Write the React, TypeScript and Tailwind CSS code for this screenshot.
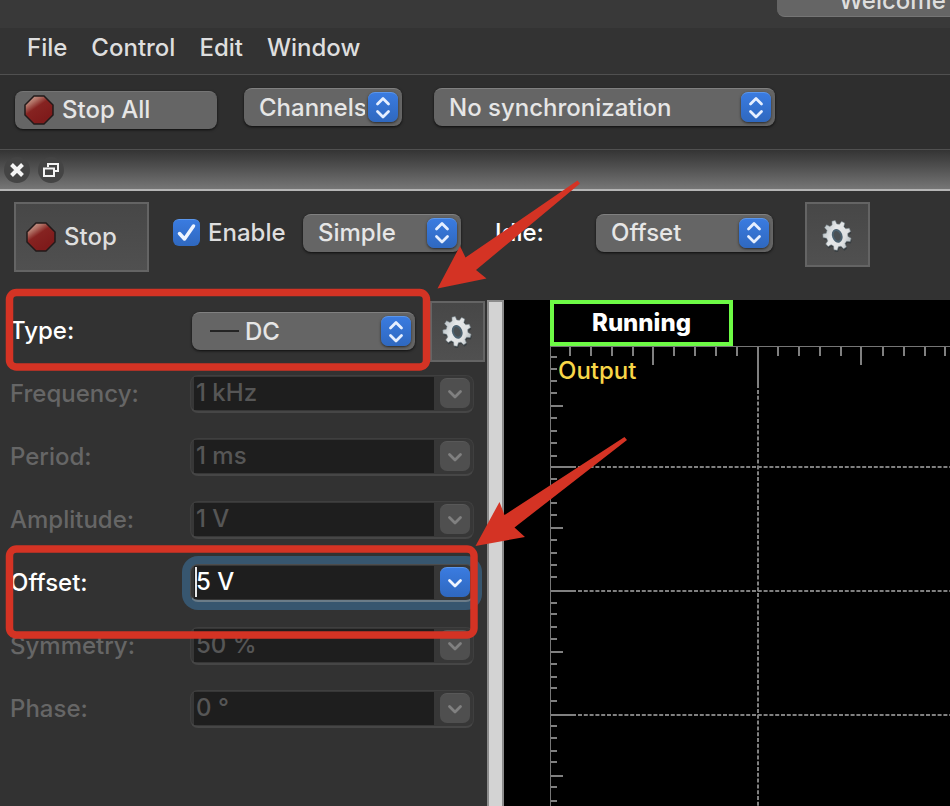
import { useState } from 'react';
import type { ReactNode } from 'react';

const FIELDS = [
  { id: 'frequency', label: 'Frequency:', value: '1 kHz', enabled: false },
  { id: 'period', label: 'Period:', value: '1 ms', enabled: false },
  { id: 'amplitude', label: 'Amplitude:', value: '1 V', enabled: false },
  { id: 'offset', label: 'Offset:', value: '5 V', enabled: true },
  { id: 'symmetry', label: 'Symmetry:', value: '50 %', enabled: false },
  { id: 'phase', label: 'Phase:', value: '0 °', enabled: false },
];

// Tick positions along the plot axes, measured from the plot's corner.
const X_TICKS = [20, 41, 62, 83, 103, 124, 145, 166, 187, 208, 228, 249, 270, 291, 311, 333, 354, 375, 395];
const Y_TICKS = [
  11, 23, 35, 47, 60, 72, 85, 97, 110, 121, 133, 145, 157, 169, 182, 194, 207, 219, 231, 245,
  257, 268, 281, 293, 306, 318, 331, 342, 355, 369, 380, 392, 405, 416, 430, 441, 455,
];

function StopIcon() {
  return (
    <svg width="30" height="30" viewBox="0 0 30 30" className="shrink-0" aria-hidden="true">
      <defs>
        <linearGradient id="stopFill" x1="0.15" y1="0" x2="0.7" y2="0.8">
          <stop offset="0" stopColor="#cda79a" />
          <stop offset="0.25" stopColor="#b27367" />
          <stop offset="0.5" stopColor="#862321" />
          <stop offset="1" stopColor="#7f1b1b" />
        </linearGradient>
      </defs>
      <path
        d="M10 1H20L29 10V20L20 29H10L1 20V10Z"
        fill="url(#stopFill)"
        stroke="#221a1a"
        strokeWidth="1.500"
      />
    </svg>
  );
}

function gearPath(teeth: number, outer: number, inner: number) {
  const points: string[] = [];
  const step = (Math.PI * 2) / teeth;
  for (let i = 0; i < teeth; i++) {
    const a = i * step - 1.45;
    [
      [a - step * 0.32, inner],
      [a - step * 0.17, outer],
      [a + step * 0.17, outer],
      [a + step * 0.32, inner],
    ].forEach(([angle, r]) => {
      points.push(`${(17 + Math.cos(angle) * r).toFixed(2)} ${(17 + Math.sin(angle) * r).toFixed(2)}`);
    });
  }
  return `M${points.join('L')}Z`;
}

function GearIcon() {
  return (
    <svg width="34" height="34" viewBox="0 0 34 34" aria-hidden="true">
      <defs>
        <linearGradient id="gearFill" x1="0" y1="0" x2="1" y2="1">
          <stop offset="0" stopColor="#a9b3b8" />
          <stop offset="0.4" stopColor="#e6e8e9" />
          <stop offset="0.7" stopColor="#dfe1e2" />
          <stop offset="1" stopColor="#98a3a9" />
        </linearGradient>
      </defs>
      <g transform="rotate(-20 17 17) scale(0.94 1)">
        <path d={gearPath(9, 15, 11.5)} fill="#2c3438" opacity="0.6" transform="translate(0 2)" />
        <path d={gearPath(9, 15, 11.5)} fill="url(#gearFill)" stroke="#7d8c94" strokeWidth="0.500" strokeLinejoin="round" />
        <ellipse cx="17" cy="17.500" rx="4.500" ry="6" fill="#4c5154" stroke="#4d6270" strokeWidth="2" />
      </g>
    </svg>
  );
}

function GearButton({ label, className }: { label: string; className: string }) {
  return (
    <button
      aria-label={label}
      className={`flex shrink-0 items-center justify-center border-2 border-[#646464] bg-gradient-to-b from-[#474747] to-[#505050] ${className}`}
    >
      <GearIcon />
    </button>
  );
}

function Picker({
  label,
  value,
  className,
  inset = 'pl-[15px]',
  icon,
}: {
  label: string;
  value: string;
  className: string;
  inset?: string;
  icon?: ReactNode;
}) {
  return (
    <div className={`relative h-[38px] shrink-0 ${className}`}>
      <select
        aria-label={label}
        className={`block h-full w-full appearance-none rounded-lg border-t border-[#808080] bg-[#656565] pr-[37px] text-[#e6e6e6] shadow-sm shadow-black/60 ${inset}`}
      >
        <option>{value}</option>
      </select>
      {icon}
      <span className="pointer-events-none absolute top-1 right-1 flex size-[30px] items-center justify-center rounded-[7px] border-t border-[#5a96ec] bg-gradient-to-b from-[#3a7be0] to-[#2f68bf] shadow-sm shadow-black/50">
        <svg width="16" height="24" viewBox="0 0 16 24" fill="none" stroke="#e6efff" strokeWidth="2.800" strokeLinecap="round" strokeLinejoin="round" aria-hidden="true">
          <path d="M2.500 8L8 2.500L13.500 8M2.500 15.500L8 21L13.500 15.500" />
        </svg>
      </span>
    </div>
  );
}

function ValueField({ id, label, value, enabled }: (typeof FIELDS)[number]) {
  const [text, setText] = useState(value);

  return (
    <div className="flex h-[63px] items-center pr-[13px] pl-2.5">
      <label htmlFor={id} className={`flex-1 ${enabled ? 'text-white' : 'text-[#666666]'}`}>
        {label}
      </label>
      <div
        className={`relative flex h-[38px] w-[284px] items-center rounded-lg border border-b-2 bg-[#373737] px-[3px] ${
          enabled ? 'border-[#4c4c4c] border-b-[#6b7c88] ring-8 ring-[#37566f]' : 'border-[#3f3f3f] border-b-[#464646]'
        }`}
      >
        <input
          id={id}
          value={text}
          disabled={!enabled}
          onChange={(e) => setText(e.target.value)}
          className={`h-[33px] w-[240px] bg-[#1e1e1e] pb-0.5 pl-0.5 outline-none ${enabled ? 'text-white' : 'text-[#565656]'}`}
        />
        {enabled && <span className="absolute top-0.5 left-1 h-[30px] w-0.5 bg-[#e8e8e8]" />}
        <button
          aria-label={`${label} presets`}
          disabled={!enabled}
          className={`ml-1.5 flex size-[30px] shrink-0 items-center justify-center rounded-[7px] border-t ${
            enabled
              ? 'border-[#5a96ec] bg-gradient-to-b from-[#3a7be0] to-[#2f68bf] text-[#eef4ff]'
              : 'border-[#585858] bg-[#4f4f4f] text-[#808080]'
          }`}
        >
          <svg width="16" height="10" viewBox="0 0 16 10" fill="none" stroke="currentColor" strokeWidth="2.800" strokeLinecap="round" strokeLinejoin="round" aria-hidden="true">
            <path d="M2.500 2.500L8 8L13.500 2.500" />
          </svg>
        </button>
      </div>
    </div>
  );
}

function PlotGrid() {
  return (
    <svg className="block h-full w-full" stroke="#808080" aria-hidden="true">
      <path d="M0.500 0V4000M0 0.500H4000" stroke="#757575" />
      {X_TICKS.map((x, i) => (
        <line key={x} x1={x} x2={x} y1="1" y2={(i + 1) % 10 === 0 ? 42 : (i + 1) % 5 === 0 ? 19 : 10} strokeWidth="2" />
      ))}
      {Y_TICKS.map((y, i) => (
        <line key={y} y1={y} y2={y} x1="1" x2={i % 10 === 9 ? 26 : i % 5 === 4 ? 13 : 7} strokeWidth="2" />
      ))}
      {Y_TICKS.filter((_, i) => i % 10 === 9).map((y) => (
        <line key={y} x1="28" x2="100%" y1={y} y2={y} strokeWidth="2" strokeDasharray="4 1.800" />
      ))}
      <line x1="208" x2="208" y1="44" y2="100%" strokeWidth="2" strokeDasharray="4 1.800" />
    </svg>
  );
}

function Annotations() {
  return (
    <svg width="640" height="660" viewBox="0 0 640 660" className="pointer-events-none absolute top-0 left-0" aria-hidden="true">
      <g fill="none" stroke="#d43324" strokeWidth="7.500">
        <rect x="9.500" y="292.500" width="417" height="74.500" rx="7" />
        <rect x="9.500" y="549" width="464.500" height="86" rx="7" />
      </g>
      <g fill="#d43324">
        <path d="M577.500 180.500L580 183.500L476 270L486.500 278.500L437.500 288.500L460 246L465.500 257.500Z" />
        <path d="M624.500 437L627 440L514.500 527.500L525 537L475.500 546L499.500 502L504.500 515Z" />
      </g>
    </svg>
  );
}

export default function App() {
  const [enabled, setEnabled] = useState(true);

  return (
    <div className="relative flex min-h-screen flex-col overflow-hidden bg-[#323232] font-['Inter','Liberation_Sans',sans-serif] text-2xl leading-[30px] font-medium text-[#dedede]">
      <header className="flex h-7 items-start justify-end overflow-hidden bg-[#393939]">
        <button className="flex h-[17px] w-[173px] items-end rounded-bl-lg border-b border-[#757575] bg-[#656565] pl-[62px] whitespace-nowrap">
          Welcome
        </button>
      </header>

      <nav className="flex h-[47px] items-center gap-6 border-b border-[#505050] bg-[#333333] pb-1.5 pl-[27px]">
        <button>File</button>
        <button>Control</button>
        <button>Edit</button>
        <button>Window</button>
      </nav>

      <div className="flex h-[75px] gap-[27px] border-b border-[#505050] bg-[#2e2e2e] pl-[15px]">
        <div className="flex items-center pb-1">
          <button className="flex h-[38px] w-[202px] items-center gap-2 rounded-lg border-t border-[#757575] bg-[#656565] pb-0.5 pl-[9px] text-[#e6e6e6] shadow-sm shadow-black/60">
            <StopIcon />
            Stop All
          </button>
        </div>
        <div className="flex items-center gap-8 pb-2.5">
          <Picker label="Channels" value="Channels" className="w-[158px]" />
          <Picker label="Synchronization" value="No synchronization" className="w-[341px]" />
        </div>
      </div>

      <div className="flex h-[41px] items-center gap-2 border-b-2 border-[#b5b5b5] bg-gradient-to-b from-[#343434] to-[#767676] pl-1">
        <button aria-label="Close panel" className="flex size-[26px] items-center justify-center rounded-full bg-[#444444]">
          <svg width="16" height="16" viewBox="0 0 16 16" stroke="#f4f4f4" strokeWidth="4" aria-hidden="true">
            <path d="M2.500 2.500L13.500 13.500M13.500 2.500L2.500 13.500" />
          </svg>
        </button>
        <button aria-label="Detach panel" className="flex size-[26px] items-center justify-center rounded-full bg-[#444444]">
          <svg width="16" height="16" viewBox="0 0 16 16" fill="none" stroke="#f4f4f4" strokeWidth="2" aria-hidden="true">
            <path d="M5 5V2H15V9H12M1 6.500H11V14H1Z" />
          </svg>
        </button>
      </div>

      <div className="flex h-[109px] items-start pt-[11px] pl-3.5">
        <button className="flex h-[70px] w-[135px] shrink-0 items-center gap-2 border-2 border-[#646464] bg-gradient-to-b from-[#474747] to-[#505050] pl-2.5">
          <StopIcon />
          Stop
        </button>
        <div className="flex h-[65px] items-center pb-1 pl-6">
          <label className="flex w-[112px] items-center gap-2">
            <span className="relative size-[27px] shrink-0">
              <input
                type="checkbox"
                checked={enabled}
                onChange={(e) => setEnabled(e.target.checked)}
                className="block size-full appearance-none rounded-md border-t border-[#5a96ec] bg-gradient-to-b from-[#3a7be0] to-[#2f68bf]"
              />
              {enabled && (
                <svg viewBox="0 0 27 27" fill="none" stroke="#eef4ff" strokeWidth="3.500" strokeLinecap="round" strokeLinejoin="round" className="pointer-events-none absolute inset-0" aria-hidden="true">
                  <path d="M6.500 14.500L11.500 20L20.500 7" />
                </svg>
              )}
            </span>
            Enable
          </label>
          <div className="flex items-center pl-[18px]">
            <Picker label="Mode" value="Simple" className="w-[158px]" />
            <span className="w-[135px] pl-[34px] text-white">Idle:</span>
            <Picker label="Idle" value="Offset" className="w-[177px]" />
          </div>
        </div>
        <div className="pl-8">
          <GearButton label="Channel options" className="size-[65px]" />
        </div>
      </div>

      <main className="flex flex-1">
        <section className="w-[487px] shrink-0">
          <div className="flex h-[62px] items-center pr-0.5 pl-2.5">
            <span className="flex-1 text-white">Type:</span>
            <Picker
              label="Type"
              value="DC"
              className="w-[223px]"
              inset="pl-[53px]"
              icon={
                <svg width="29" height="4" className="pointer-events-none absolute top-[17px] left-[18px]" aria-hidden="true">
                  <path d="M0 2H29" stroke="#242424" strokeWidth="2" />
                </svg>
              }
            />
            <div className="pl-[15px]">
              <GearButton label="Type options" className="h-[61px] w-[55px]" />
            </div>
          </div>
          {FIELDS.map((field) => (
            <ValueField key={field.id} {...field} />
          ))}
        </section>

        <div className="w-[17px] shrink-0 border-x-2 border-t-2 border-[#8c8c8c] bg-[#d3d3d3]" />

        <section className="flex min-w-0 flex-1 flex-col bg-black pl-[46px]">
          <div className="flex h-[46px] w-[183px] items-center justify-center border-4 border-[#6dfb45] font-extrabold text-white">
            Running
          </div>
          <div className="relative flex-1">
            <div className="absolute inset-0">
              <PlotGrid />
            </div>
            <span className="absolute top-2.5 left-2 text-[#f8d648]">Output</span>
          </div>
        </section>
      </main>

      <Annotations />
    </div>
  );
}
